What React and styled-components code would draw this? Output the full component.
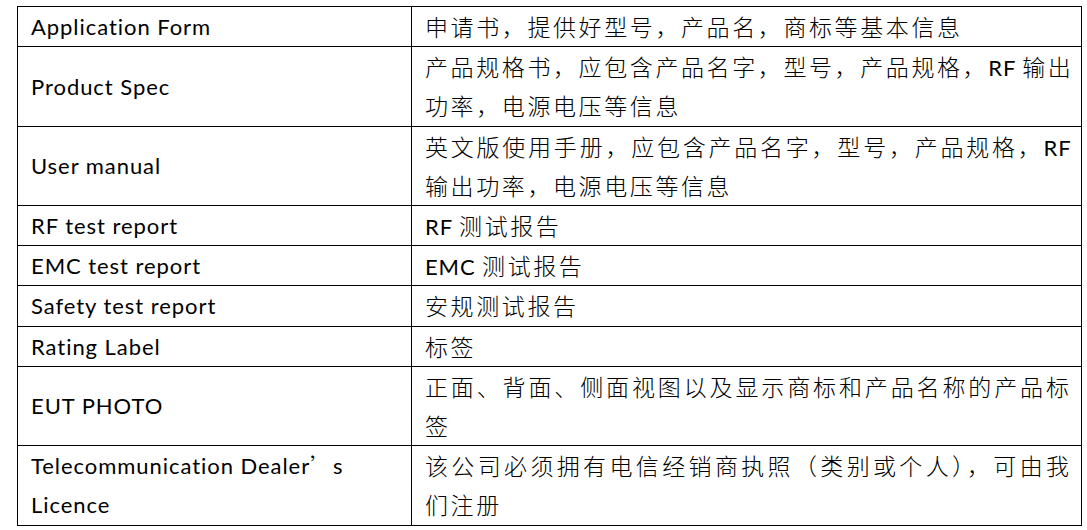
import React from "react";
import styled, { createGlobalStyle } from "styled-components";

const GlobalStyle = createGlobalStyle`
    html, body {
        margin: 0;
        padding: 0;
        background: #fff;
    }
`;

const Page = styled.div`
    padding: 6px 0 0 17px;
`;

const Table = styled.table`
    border-collapse: collapse;
    width: 1065px;
    table-layout: fixed;
    color: #000;
`;

const Cell = styled.td`
    border: 1px solid #000;
    padding: 0 12px 0 13px;
    line-height: 39.2px;
    vertical-align: ${(props) => (props.top ? "top" : "middle")};
`;

const NameCell = styled(Cell)`
    width: 368px;
    font-family: "Lato", "Liberation Sans", sans-serif;
    font-size: 22px;
    letter-spacing: 0.95px;
`;

const InfoCell = styled(Cell)`
    font-family: "Noto Sans CJK SC", sans-serif;
    font-weight: 300;
    font-size: 23px;
    letter-spacing: 2.6px;
`;

const Line = styled.span`
    display: block;
    white-space: nowrap;
    text-align: ${(props) => (props.full ? "justify" : "left")};
    text-align-last: ${(props) => (props.full ? "justify" : "left")};
    margin-right: ${(props) => (props.full ? "-2.6px" : "0")};
`;

const Latin = styled.span`
    font-family: "Lato", "Liberation Sans", sans-serif;
    font-weight: 400;
    font-size: 22px;
    line-height: 1;
    letter-spacing: 0.9px;
`;

const Quote = styled.span`
    font-family: "Noto Sans CJK SC", sans-serif;
    font-weight: 300;
    line-height: 1;
`;

const rows = [
    {
        name: "Application Form",
        info: [["申请书，提供好型号，产品名，商标等基本信息"]],
    },
    {
        name: "Product Spec",
        info: [
            ["产品规格书，应包含产品名字，型号，产品规格，", <Latin key="rf">RF </Latin>, "输出"],
            ["功率，电源电压等信息"],
        ],
    },
    {
        name: "User manual",
        info: [
            ["英文版使用手册，应包含产品名字，型号，产品规格，", <Latin key="rf">RF</Latin>],
            ["输出功率，电源电压等信息"],
        ],
    },
    { name: "RF test report", info: [[<Latin key="rf">RF </Latin>, "测试报告"]] },
    { name: "EMC test report", info: [[<Latin key="emc">EMC </Latin>, "测试报告"]] },
    { name: "Safety test report", info: [["安规测试报告"]] },
    { name: "Rating Label", info: [["标签"]] },
    {
        name: "EUT PHOTO",
        info: [["正面、背面、侧面视图以及显示商标和产品名称的产品标"], ["签"]],
    },
    {
        name: (
            <>
                Telecommunication Dealer<Quote>’</Quote>s
                <br />
                Licence
            </>
        ),
        info: [["该公司必须拥有电信经销商执照（类别或个人），可由我"], ["们注册"]],
    },
];

function App() {
    return (
        <>
            <GlobalStyle />
            <Page>
                <Table>
                    <tbody>
                        {rows.map((row, i) => (
                            <tr key={i}>
                                <NameCell>{row.name}</NameCell>
                                <InfoCell top>
                                    {row.info.map((parts, j) => (
                                        <Line key={j} full={row.info.length > 1 && j < row.info.length - 1}>
                                            {parts}
                                        </Line>
                                    ))}
                                </InfoCell>
                            </tr>
                        ))}
                    </tbody>
                </Table>
            </Page>
        </>
    );
}

export default App;
